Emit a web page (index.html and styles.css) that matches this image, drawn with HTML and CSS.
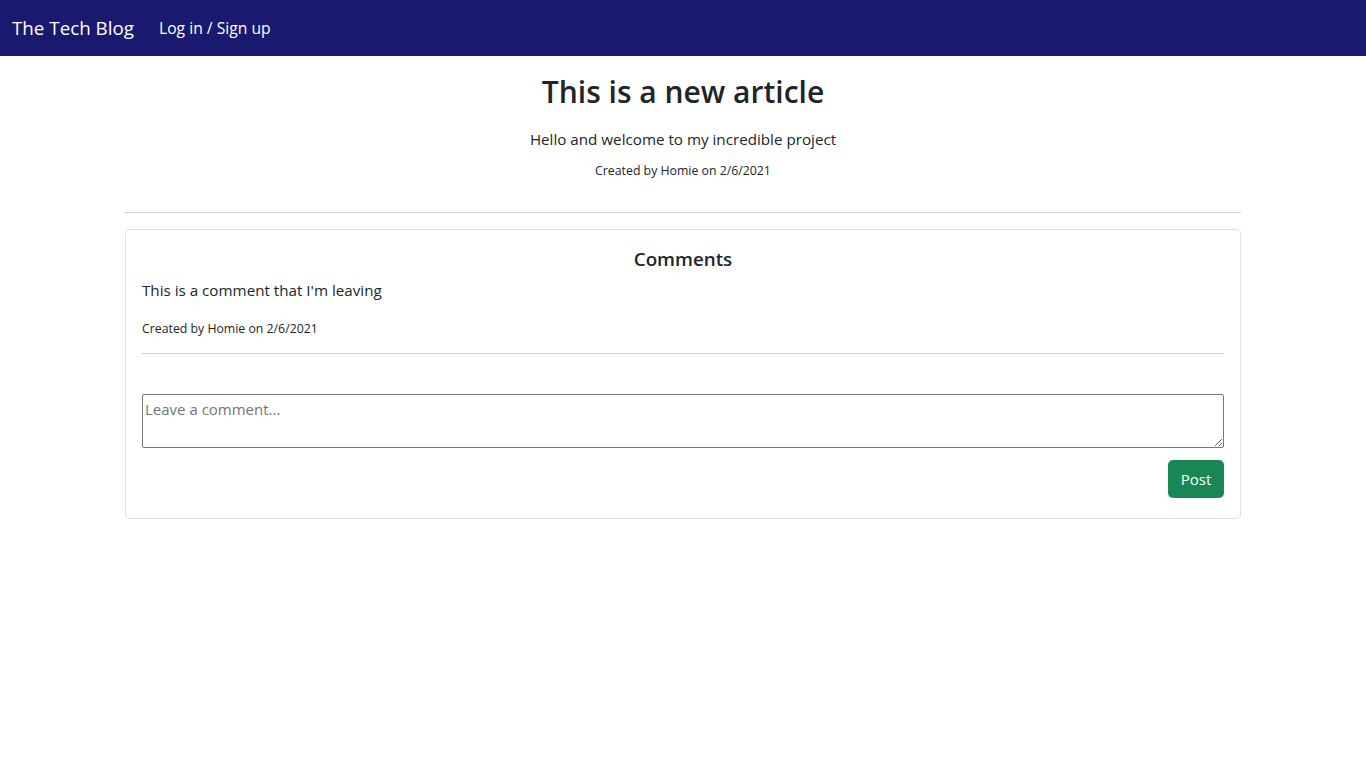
FILE: index.html
```html
<!DOCTYPE html>
<html lang="en">
<head>
<meta charset="utf-8">
<title>The Tech Blog</title>
<link rel="stylesheet" href="styles.css">
</head>
<body>
<nav class="navbar">
  <a class="brand" href="#">The Tech Blog</a>
  <a class="nav-link" href="#">Log in / Sign up</a>
</nav>
<main class="container">
  <section class="article">
    <h1 class="article-title">This is a new article</h1>
    <p class="article-body">Hello and welcome to my incredible project</p>
    <p class="meta">Created by Homie on 2/6/2021</p>
  </section>
  <hr class="divider">
  <section class="card">
    <h5 class="card-title">Comments</h5>
    <div class="comment">
      <p class="comment-text">This is a comment that I'm leaving</p>
      <p class="meta meta-left">Created by Homie on 2/6/2021</p>
      <hr class="divider inner">
    </div>
    <form class="comment-form">
      <textarea class="comment-input" placeholder="Leave a comment..."></textarea>
      <div class="form-actions">
        <button type="button" class="btn-post">Post</button>
      </div>
    </form>
  </section>
</main>
</body>
</html>
```
FILE: styles.css
```css
* { box-sizing: border-box; }
body {
  margin: 0;
  font-family: "Open Sans", "Noto Sans", sans-serif;
  color: #212529;
  background: #fff;
  font-size: 15.2px;
}
.navbar {
  height: 56px;
  background: #191970;
  display: flex;
  align-items: center;
  padding: 0 12px;
}
.brand {
  color: #fff;
  text-decoration: none;
  font-size: 18.8px;
  margin-right: 25px;
}
.nav-link {
  color: #fff;
  text-decoration: none;
  font-size: 15.7px;
}
.container {
  max-width: 1140px;
  margin: 0 auto;
  padding: 0 12px;
}
.article { text-align: center; padding-top: 17px; }
.article-title {
  margin: 0;
  font-size: 30px;
  line-height: 38px;
  font-weight: 600;
}
.article-body {
  margin: 16px 0 0;
  line-height: 24px;
}
.meta {
  margin: 10px 0 0;
  font-size: 12.3px;
  line-height: 20px;
}
.divider {
  border: 0;
  border-top: 1px solid #cfd0d1;
  margin: 31px 0 16px;
}
.card {
  border: 1px solid #dfdfdf;
  border-radius: 4px;
  padding: 17px 16px 20px;
}
.card-title {
  margin: 0;
  text-align: center;
  font-size: 18.8px;
  line-height: 24px;
  font-weight: 600;
}
.comment-text {
  margin: 7px 0 0;
  line-height: 24px;
}
.meta-left { margin-top: 17px; }
.divider.inner { margin: 14px 0 40px; }
.comment-input {
  display: block;
  width: 100%;
  height: 54px;
  border: 1px solid #767676;
  border-radius: 2px;
  font-family: inherit;
  font-size: 15px;
  padding: 4px 2px 2px;
  resize: vertical;
  color: #212529;
}
.comment-input::placeholder { color: #757575; }
.form-actions {
  display: flex;
  justify-content: flex-end;
  margin-top: 12px;
}
.btn-post {
  background: #198754;
  color: #fff;
  border: 0;
  border-radius: 5px;
  height: 38px;
  width: 56px;
  padding: 0;
  font-family: inherit;
  font-size: 15px;
}
```
